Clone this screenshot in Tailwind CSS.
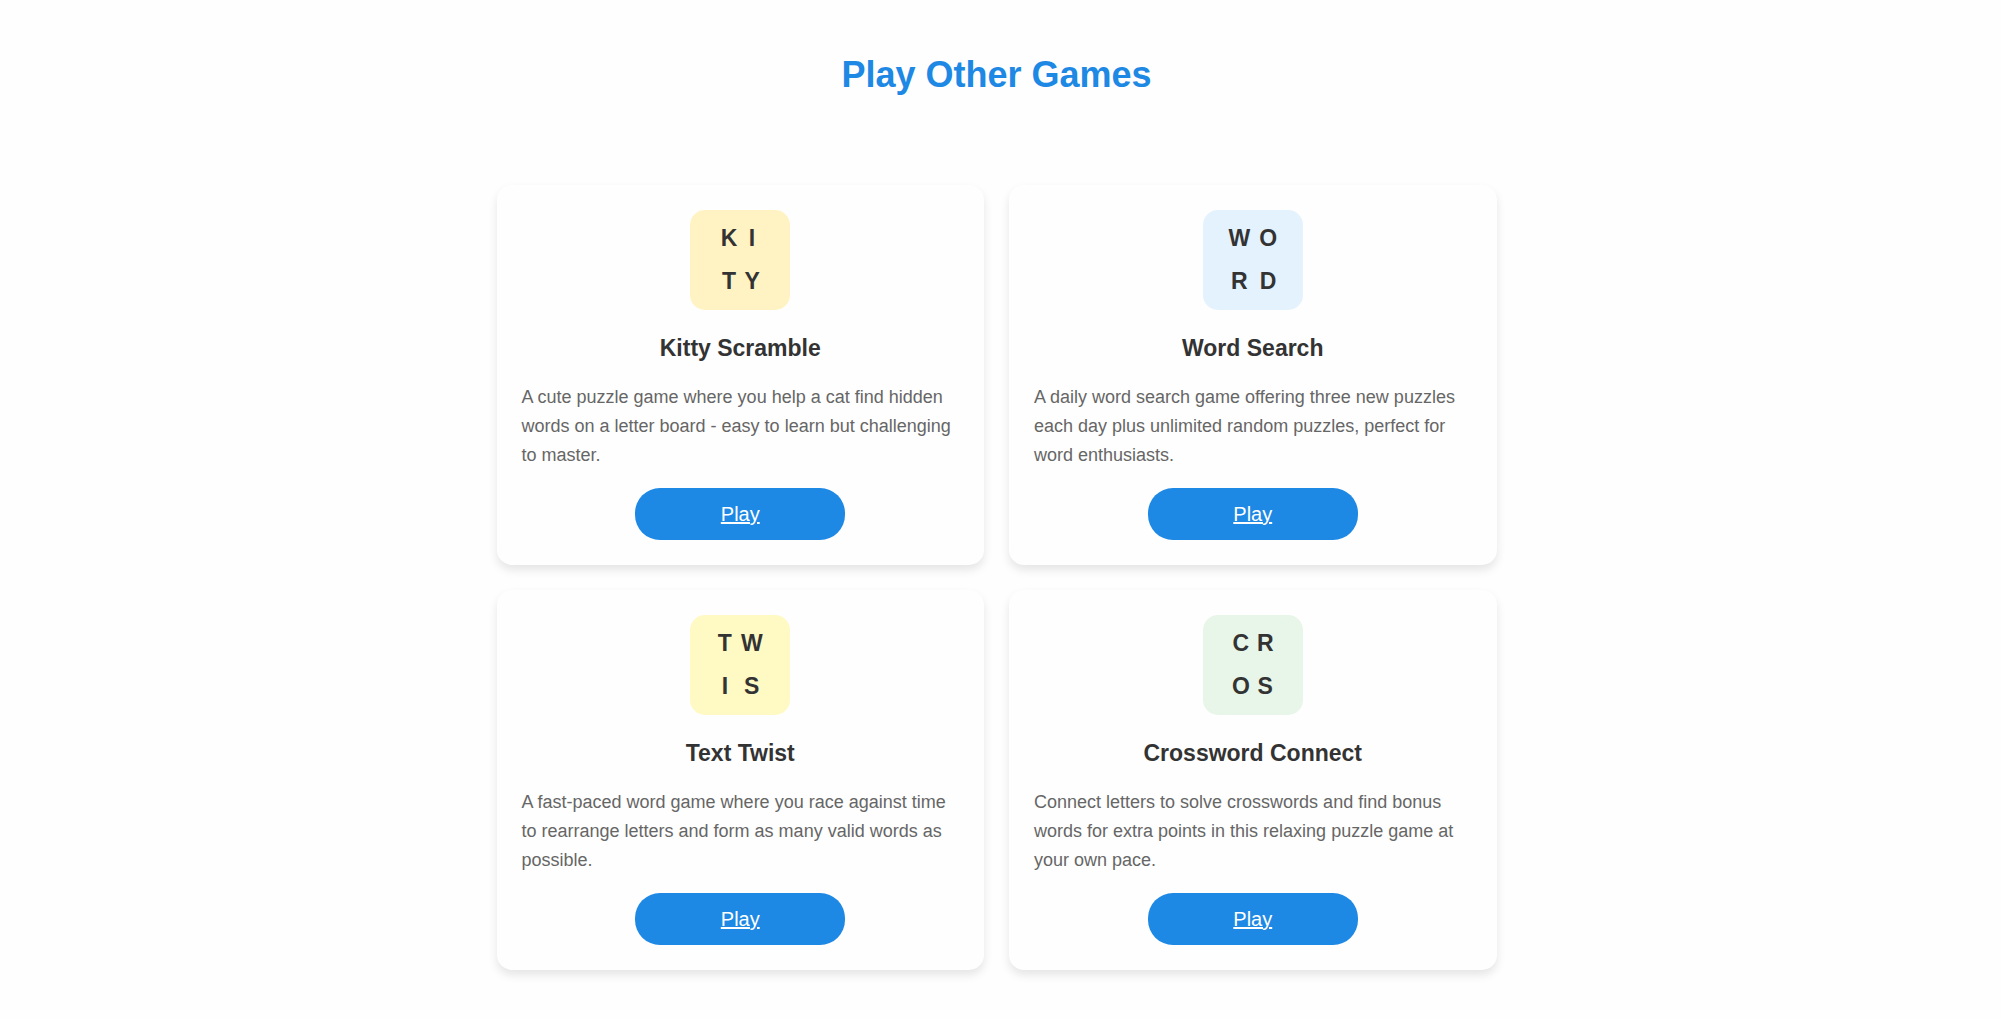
<!DOCTYPE html>
<html lang="en">
<head>
    <meta charset="UTF-8">
    <meta name="viewport" content="width=device-width, initial-scale=1.0">
    <title>Play Other Games</title>
    <script src="https://cdn.jsdelivr.net/npm/@tailwindcss/browser@4"></script>
</head>
<body class="bg-[#fefefe] font-['Liberation_Sans',Arial,sans-serif] text-[#333]">
    <section class="pt-[45px] pr-7 pb-[46px] pl-5">
        <h2 class="text-center text-4xl leading-[60px] font-bold text-[#1e88e5]">Play Other Games</h2>

        <!-- Game cards -->
        <div class="mx-auto mt-20 grid max-w-[1000px] grid-cols-1 gap-[25px] md:grid-cols-2">
            <!-- Kitty Scramble -->
            <div class="flex flex-col items-center rounded-[15px] bg-[#fefefe] p-[25px] shadow-[0_5px_10px_rgba(0,0,0,0.1)]">
                <div class="grid size-[100px] grid-cols-[auto_auto] place-content-center justify-items-center gap-x-[7px] rounded-[15px] bg-[#fff3c4] text-[23px] leading-[43px] font-bold">
                    <span>K</span><span>I</span><span>T</span><span>Y</span>
                </div>
                <h3 class="mt-5 text-[23px] leading-9 font-bold">Kitty Scramble</h3>
                <p class="mt-[17px] w-full text-lg leading-[29px] text-[#666]">A cute puzzle game where you help a cat find hidden words on a letter board - easy to learn but challenging to master.</p>
                <a href="#" class="mt-[18px] w-[210px] rounded-[25px] bg-[#1e88e5] text-center text-xl leading-[52px] text-white underline">Play</a>
            </div>

            <!-- Word Search -->
            <div class="flex flex-col items-center rounded-[15px] bg-[#fefefe] p-[25px] shadow-[0_5px_10px_rgba(0,0,0,0.1)]">
                <div class="grid size-[100px] grid-cols-[auto_auto] place-content-center justify-items-center gap-x-[9px] rounded-[15px] bg-[#e3f2fd] text-[23px] leading-[43px] font-bold">
                    <span>W</span><span>O</span><span>R</span><span>D</span>
                </div>
                <h3 class="mt-5 text-[23px] leading-9 font-bold">Word Search</h3>
                <p class="mt-[17px] w-full text-lg leading-[29px] text-[#666]">A daily word search game offering three new puzzles each day plus unlimited random puzzles, perfect for word enthusiasts.</p>
                <a href="#" class="mt-[18px] w-[210px] rounded-[25px] bg-[#1e88e5] text-center text-xl leading-[52px] text-white underline">Play</a>
            </div>

            <!-- Text Twist -->
            <div class="flex flex-col items-center rounded-[15px] bg-[#fefefe] p-[25px] shadow-[0_5px_10px_rgba(0,0,0,0.1)]">
                <div class="grid size-[100px] grid-cols-[auto_auto] place-content-center justify-items-center gap-x-[9px] rounded-[15px] bg-[#fff9c4] text-[23px] leading-[43px] font-bold">
                    <span>T</span><span>W</span><span>I</span><span>S</span>
                </div>
                <h3 class="mt-5 text-[23px] leading-9 font-bold">Text Twist</h3>
                <p class="mt-[17px] w-full text-lg leading-[29px] text-[#666]">A fast-paced word game where you race against time to rearrange letters and form as many valid words as possible.</p>
                <a href="#" class="mt-[18px] w-[210px] rounded-[25px] bg-[#1e88e5] text-center text-xl leading-[52px] text-white underline">Play</a>
            </div>

            <!-- Crossword Connect -->
            <div class="flex flex-col items-center rounded-[15px] bg-[#fefefe] p-[25px] shadow-[0_5px_10px_rgba(0,0,0,0.1)]">
                <div class="grid size-[100px] grid-cols-[auto_auto] place-content-center justify-items-center gap-x-[7px] rounded-[15px] bg-[#e8f5e9] text-[23px] leading-[43px] font-bold">
                    <span>C</span><span>R</span><span>O</span><span>S</span>
                </div>
                <h3 class="mt-5 text-[23px] leading-9 font-bold">Crossword Connect</h3>
                <p class="mt-[17px] w-full text-lg leading-[29px] text-[#666]">Connect letters to solve crosswords and find bonus words for extra points in this relaxing puzzle game at your own pace.</p>
                <a href="#" class="mt-[18px] w-[210px] rounded-[25px] bg-[#1e88e5] text-center text-xl leading-[52px] text-white underline">Play</a>
            </div>
        </div>
    </section>
</body>
</html>
